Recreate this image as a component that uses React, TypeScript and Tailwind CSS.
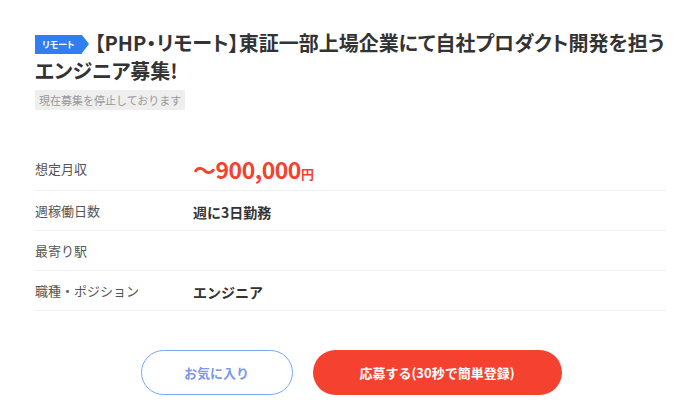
const font = { fontFamily: '"Noto Sans CJK JP", "Noto Sans", sans-serif' };

const rows: { label: string; value: React.ReactNode }[] = [
  {
    label: "想定月収",
    value: (
      <span className="font-bold text-[#f5412f]">
        <span className="text-[23px] tracking-[-0.5px]">～900,000</span>
        <span className="text-[13px]">円</span>
      </span>
    ),
  },
  { label: "週稼働日数", value: <span className="text-[14px] font-bold text-[#333]">週に3日勤務</span> },
  { label: "最寄り駅", value: null },
  { label: "職種・ポジション", value: <span className="text-[14px] font-bold text-[#333]">エンジニア</span> },
];

export default function App() {
  return (
    <div className="min-h-[409px] w-[700px] bg-white" style={font}>
      <div className="flex w-[632px] flex-col ml-[35px] pt-[29px]">
        {/* Title */}
        <h1 className="whitespace-nowrap text-[20px] font-bold leading-[28px] text-[#333] [font-feature-settings:'palt']">
          <span className="relative mr-[13px] inline-flex h-[19px] items-center bg-[#2f7ff0] px-[7px] align-[3px] text-[9px] leading-none text-white">
            リモート
            <span className="absolute right-[-7px] top-0 h-0 w-0 border-y-[9.5px] border-l-[7px] border-y-transparent border-l-[#2f7ff0]" />
          </span>
          【PHP・リモート】東証一部上場企業にて自社プロダクト開発を担う
          <br />
          エンジニア募集!
        </h1>
        <div className="mt-[1px]">
          <span className="inline-block rounded-[2px] bg-[#eeeeee] px-[4px] py-[3px] text-[11px] leading-[14px] text-[#999]">
            現在募集を停止しております
          </span>
        </div>

        {/* Table */}
        <div className="mt-[41px] flex flex-col">
          {rows.map((r, i) => (
            <div
              key={r.label}
              className={`flex h-[40px] items-center border-b border-[#f0f0f0] ${i === 0 ? "pb-[3px]" : ""}`}
            >
              <div className="w-[158px] text-[13px] text-[#555]">{r.label}</div>
              <div>{r.value}</div>
            </div>
          ))}
        </div>

        {/* Buttons */}
        <div className="mt-[39px] flex justify-center gap-[20px]">
          <button className="h-[45px] w-[152px] rounded-full border border-[#7aa7f7] bg-white text-[13px] font-bold text-[#7b98f0]">
            お気に入り
          </button>
          <button className="h-[45px] w-[249px] rounded-full bg-[#f5412f] text-[13px] font-bold text-white">
            応募する(30秒で簡単登録)
          </button>
        </div>
      </div>
    </div>
  );
}
